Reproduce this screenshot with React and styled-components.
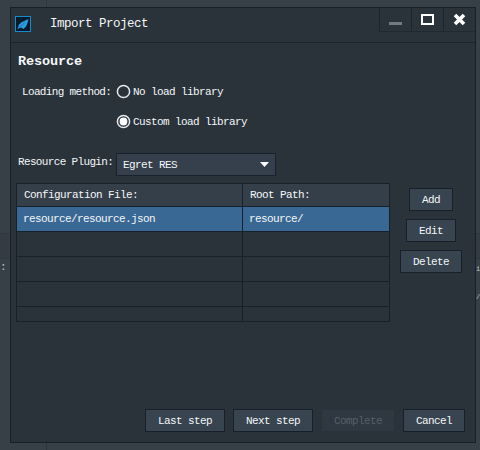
import React from "react";
import styled, { createGlobalStyle, css } from "styled-components";

const Global = createGlobalStyle`
  * { box-sizing: border-box; }
  body { margin: 0; background: #373f47; }
`;

const Workspace = styled.div`
  display: grid;
  grid-template-columns: 10px 466px 4px;
  grid-template-rows: 7px 436px 7px;
  width: 480px;
  height: 450px;
  overflow: hidden;
  background: #373f47;
  color: #f4f7f8;
  font: 11px/14px "Liberation Mono", monospace;
  letter-spacing: -0.6px;
  white-space: pre;
`;

const Strip = styled.div`
  grid-column: 1 / -1;
  padding-left: 46px;
  &::before {
    content: "";
    display: block;
    width: 1px;
    height: 100%;
    background: #2b333b;
  }
`;

const Gutter = styled.div`
  display: flex;
  flex-direction: column;
  overflow: hidden;
  padding-top: 226px;
  color: #c3c9cc;
`;

const GutterBand = styled.div`
  flex: none;
  height: 26px;
  border: solid #2e363e;
  border-width: 1px 0;
  background: #343b42;
`;

const GutterText = styled.span`
  flex: none;
  height: 28px;
  line-height: 16px;
  ${(p) => p.$narrow && css`
    font-size: 7px;
    letter-spacing: -0.5px;
    line-height: 20px;
  `}
`;

const Dialog = styled.section`
  display: flex;
  flex-direction: column;
  background: #2a323a;
  border: 1px solid #172029;
`;

const TitleBar = styled.header`
  display: flex;
  flex: none;
  height: 35px;
  padding-left: 4px;
  border-bottom: 1px solid #1b242d;
`;

const Logo = styled.svg`
  width: 16px;
  height: 16px;
  margin-top: 8px;
`;

const Title = styled.h1`
  flex: 1;
  margin: 8px 0 0 19px;
  font-size: 12.5px;
  line-height: 16px;
  font-weight: 400;
  letter-spacing: -0.5px;
`;

const WindowControls = styled.div`
  display: flex;
  height: 24px;
  border-bottom: 1px solid #202830;
`;

const WindowButton = styled.button`
  width: 32px;
  padding: 0;
  border: 0;
  border-left: 1px solid #1c242c;
  background: none;
  svg { display: block; }
`;

const Heading = styled.h2`
  height: 18px;
  margin: 10px 0 0 7px;
  font-size: 13.5px;
  line-height: 18px;
  letter-spacing: -0.1px;
`;

const Methods = styled.div`
  display: flex;
  margin: 13px 0 0 11px;
`;

const FieldLabel = styled.span`
  flex: none;
  width: ${(p) => p.$width}px;
  line-height: ${(p) => p.$line}px;
  letter-spacing: -0.65px;
`;

const Options = styled.div`
  display: flex;
  flex-direction: column;
  gap: 14px;
`;

const Option = styled.label`
  display: flex;
  align-items: flex-start;
  gap: 2px;
  height: 16px;
  line-height: 16px;
`;

const RadioMark = styled.svg`
  width: 15px;
  height: 15px;
`;

const PluginRow = styled.div`
  display: flex;
  margin: 23px 0 0 7px;
`;

const Select = styled.div`
  display: flex;
  align-items: center;
  justify-content: space-between;
  width: 160px;
  height: 23px;
  padding: 0 6px 0 6px;
  border: 1px solid #18212d;
  background: #36404c;
`;

const Workarea = styled.div`
  display: flex;
  margin: 7px 0 0 5px;
`;

const Table = styled.div`
  width: 374px;
  height: 139px;
  overflow: hidden;
  border: 1px solid #17212a;
`;

const Row = styled.div`
  display: grid;
  grid-template-columns: 226px 1fr;
  height: 25px;
  border-bottom: 1px solid #17212a;
  line-height: 24px;
  ${(p) => p.$header && css`
    height: 23px;
    line-height: 22px;
    background: #343f49;
  `}
  ${(p) => p.$selected && css`background: #396894;`}
`;

const Cell = styled.span`
  padding-left: ${(p) => (p.$header ? 7 : 6)}px;
  border-right: 1px solid #17212a;
  &:last-child { border-right: 0; }
`;

const Actions = styled.div`
  display: flex;
  flex-direction: column;
  align-items: center;
  gap: 8px;
  width: 62px;
  margin: 5px 0 0 10px;
`;

const Button = styled.button`
  height: 23px;
  padding: 0;
  width: ${(p) => p.$width}px;
  border: 1px solid #17202a;
  background: #394451;
  color: #f4f7f8;
  font: inherit;
  letter-spacing: inherit;
  line-height: 20px;
  &:disabled {
    border-color: #29313a;
    background: #2f3740;
    color: #56606a;
  }
`;

const Footer = styled.footer`
  display: flex;
  justify-content: flex-end;
  gap: 8px;
  margin: auto 10px 10px 0;
`;

function Radio({ checked, children }) {
  return (
    <Option>
      <RadioMark viewBox="0 0 15 15">
        <circle cx="7.5" cy="7.5" r="6.1" fill="none" stroke="#e6eaec" strokeWidth="1.5" />
        {checked && <circle cx="7.5" cy="7.5" r="3.9" fill="#fff" />}
      </RadioMark>
      {children}
    </Option>
  );
}

const rows = [["resource/resource.json", "resource/"], ["", ""], ["", ""], ["", ""], ["", ""]];

export default function App() {
  return (
    <>
      <Global />
      <Workspace>
        <Strip />
        <Gutter>
          <GutterBand />
          <GutterText>:</GutterText>
        </Gutter>
        <Dialog>
          <TitleBar>
            <Logo viewBox="0 0 16 16">
              <rect x=".5" y=".5" width="15" height="15" fill="#081b2c" stroke="#178bc8" />
              <path d="M2.5 13 4 8.5 7 6 13.5 3 12.5 7 11 10.5 8.5 13 6 11.5Z" fill="#279de5" />
              <path d="M2.5 13 10 6.5" stroke="#126aa4" strokeWidth=".7" />
            </Logo>
            <Title>Import Project</Title>
            <WindowControls>
              <WindowButton aria-label="Minimize">
                <svg width="31" height="23"><path d="M9 15.5h13" stroke="#737b82" strokeWidth="3" /></svg>
              </WindowButton>
              <WindowButton aria-label="Maximize">
                <svg width="31" height="23"><rect x="10" y="7" width="11" height="9" fill="none" stroke="#fff" strokeWidth="2" /></svg>
              </WindowButton>
              <WindowButton aria-label="Close">
                <svg width="31" height="23"><path d="m11 7 9 9m0-9-9 9" stroke="#fff" strokeWidth="3.6" /></svg>
              </WindowButton>
            </WindowControls>
          </TitleBar>
          <Heading>Resource</Heading>
          <Methods>
            <FieldLabel $width={94} $line={16}>Loading method:</FieldLabel>
            <Options>
              <Radio>No load library</Radio>
              <Radio checked>Custom load library</Radio>
            </Options>
          </Methods>
          <PluginRow>
            <FieldLabel $width={98} $line={18}>Resource Plugin:</FieldLabel>
            <Select>
              Egret RES
              <svg width="9" height="5"><path d="M0 0h9L4.5 5Z" fill="#fff" /></svg>
            </Select>
          </PluginRow>
          <Workarea>
            <Table>
              <Row $header>
                <Cell $header>Configuration File:</Cell>
                <Cell $header>Root Path:</Cell>
              </Row>
              {rows.map(([file, path], i) => (
                <Row key={i} $selected={i === 0}>
                  <Cell>{file}</Cell>
                  <Cell>{path}</Cell>
                </Row>
              ))}
            </Table>
            <Actions>
              <Button $width={44}>Add</Button>
              <Button $width={50}>Edit</Button>
              <Button $width={62}>Delete</Button>
            </Actions>
          </Workarea>
          <Footer>
            <Button $width={80}>Last step</Button>
            <Button $width={80}>Next step</Button>
            <Button $width={74} disabled>Complete</Button>
            <Button $width={62}>Cancel</Button>
          </Footer>
        </Dialog>
        <Gutter>
          <GutterBand />
          <GutterText $narrow>i</GutterText>
          <GutterText $narrow>/</GutterText>
        </Gutter>
        <Strip />
      </Workspace>
    </>
  );
}
